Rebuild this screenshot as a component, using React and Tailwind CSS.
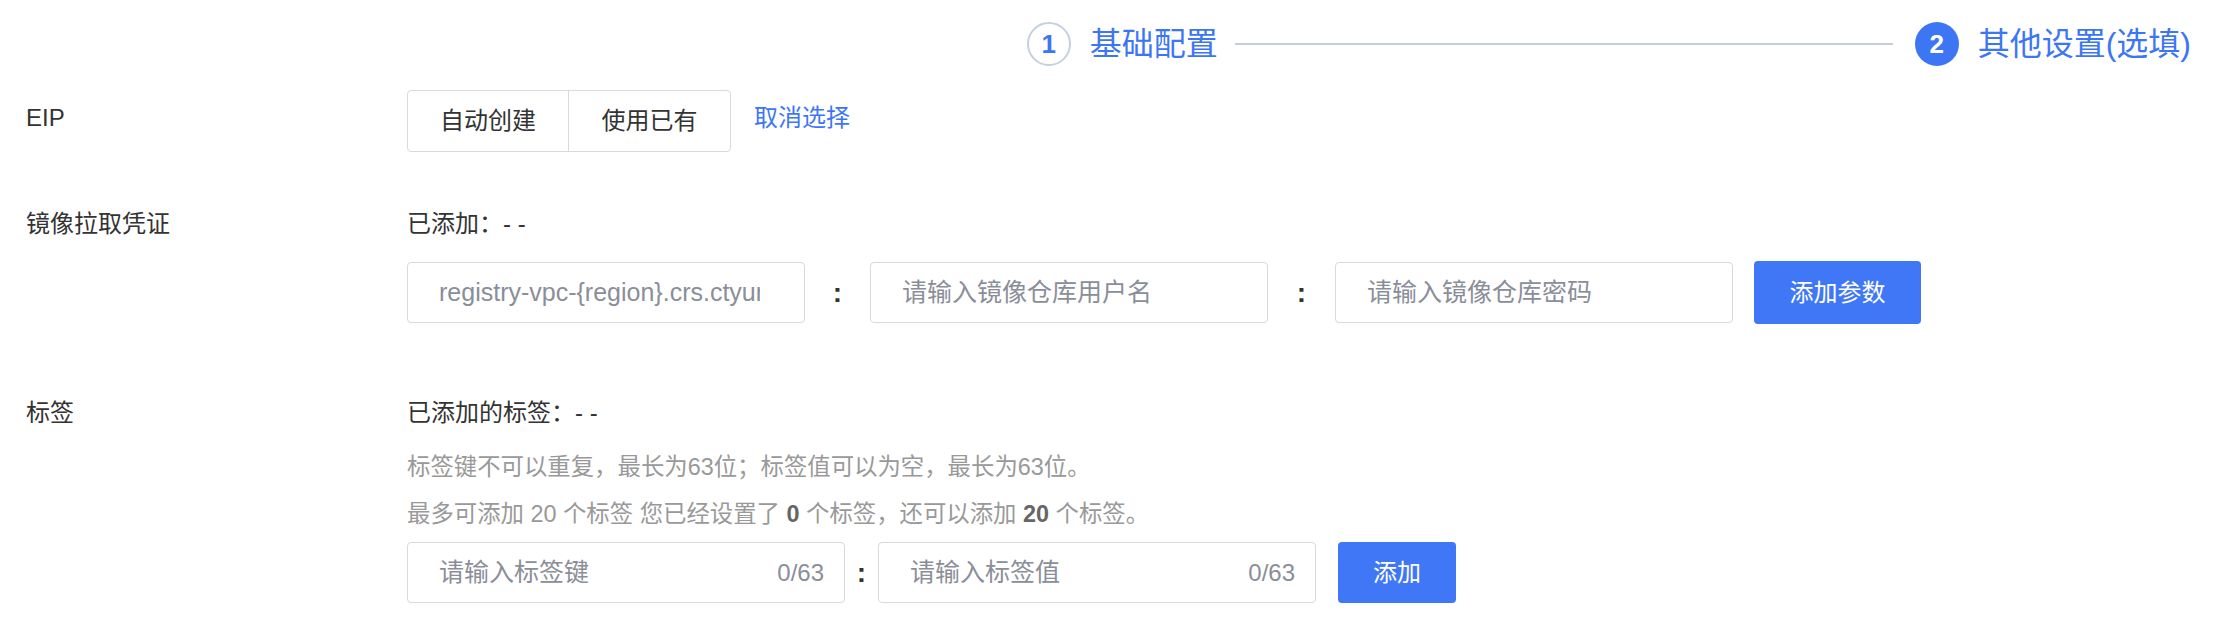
import React from 'react';

const BLUE = 'text-[#3d76f5]';

// Paso del encabezado
const Step = ({ num, label, active }) => (
    <div className="flex items-center">
        <div
            className={`flex h-[44px] w-[44px] items-center justify-center rounded-full text-[26px] font-bold ${
                active ? 'bg-[#3d76f5] text-white' : 'border-2 border-[#c5d0e0] text-[#3d76f5]'
            }`}
        >
            {num}
        </div>
        <span className={`ml-[19px] text-[32px] leading-none ${BLUE}`}>{label}</span>
    </div>
);

const Colon = ({ w }) => (
    <div className={`flex ${w} items-center justify-center text-[28px] font-bold text-[#333]`}>:</div>
);

const TextInput = ({ width, placeholder, counter, pr = 'pr-[20px]' }) => (
    <div className={`flex h-[61px] ${width} items-center rounded-[4px] border border-[#d9d9d9] bg-white pl-[31px] ${pr}`}>
        <input
            className="min-w-0 flex-1 bg-transparent text-[25px] text-[#333] outline-none placeholder:text-[#8a8e99]"
            placeholder={placeholder}
            readOnly
        />
        {counter && <span className="ml-2 text-[24px] text-[#8a8e99]">{counter}</span>}
    </div>
);

const App = () => {
    return (
        <div className="h-[633px] w-full overflow-hidden bg-white font-['Liberation_Sans','Noto_Sans_CJK_SC',sans-serif] text-[#333]">
            {/* Encabezado de pasos */}
            <header className="flex h-[88px] items-center justify-end pr-[43px]">
                <Step num="1" label="基础配置" />
                <div className="ml-[17px] mr-[22px] h-[2px] w-[658px] bg-[#c4cfdc]" />
                <Step num="2" label="其他设置(选填)" active />
            </header>

            <div className="pl-[26px]">
                {/* EIP */}
                <div className="mt-[2px] flex h-[62px] items-center">
                    <div className="w-[381px] pb-[6px] text-[24px]">EIP</div>
                    <div className="flex h-full rounded-[4px] border border-[#d9d9d9]">
                        <button className="w-[161px] border-r border-[#d9d9d9] text-[24px] text-[#333]">自动创建</button>
                        <button className="w-[161px] text-[24px] text-[#333]">使用已有</button>
                    </div>
                    <span className={`ml-[23px] pb-[6px] text-[24px] ${BLUE}`}>取消选择</span>
                </div>

                {/* 镜像拉取凭证 */}
                <div className="mt-[54px] flex">
                    <div className="w-[381px] text-[24px] leading-[36px]">镜像拉取凭证</div>
                    <div className="flex flex-col">
                        <div className="text-[24px] leading-[36px]">已添加：- -</div>
                        <div className="mt-[19px] flex h-[63px] items-center">
                            <TextInput width="w-[398px]" placeholder="registry-vpc-{region}.crs.ctyun.cn" pr="pr-[44px]" />
                            <Colon w="w-[65px]" />
                            <TextInput width="w-[398px]" placeholder="请输入镜像仓库用户名" />
                            <Colon w="w-[67px]" />
                            <TextInput width="w-[398px]" placeholder="请输入镜像仓库密码" />
                            <button className="ml-[21px] h-[63px] w-[167px] rounded-[4px] bg-[#3f77f6] text-[24px] text-white">
                                添加参数
                            </button>
                        </div>
                    </div>
                </div>

                {/* 标签 */}
                <div className="mt-[71px] flex">
                    <div className="w-[381px] text-[24px] leading-[36px]">标签</div>
                    <div className="flex flex-col">
                        <div className="text-[24px] leading-[36px]">已添加的标签：- -</div>
                        <div className="mt-[20px] text-[23.4px] leading-[32px] text-[#999]">
                            标签键不可以重复，最长为63位；标签值可以为空，最长为63位。
                        </div>
                        <div className="mt-[15px] text-[23.4px] leading-[32px] text-[#999]">
                            最多可添加 20 个标签 您已经设置了 <b className="text-[#666]">0</b> 个标签，还可以添加{' '}
                            <b className="text-[#666]">20</b> 个标签。
                        </div>
                        <div className="mt-[12px] flex h-[61px] items-center">
                            <TextInput width="w-[438px]" placeholder="请输入标签键" counter="0/63" />
                            <Colon w="w-[33px]" />
                            <TextInput width="w-[438px]" placeholder="请输入标签值" counter="0/63" />
                            <button className="ml-[22px] h-[61px] w-[118px] rounded-[4px] bg-[#3f77f6] text-[24px] text-white">
                                添加
                            </button>
                        </div>
                    </div>
                </div>
            </div>
        </div>
    );
};

export default App;
